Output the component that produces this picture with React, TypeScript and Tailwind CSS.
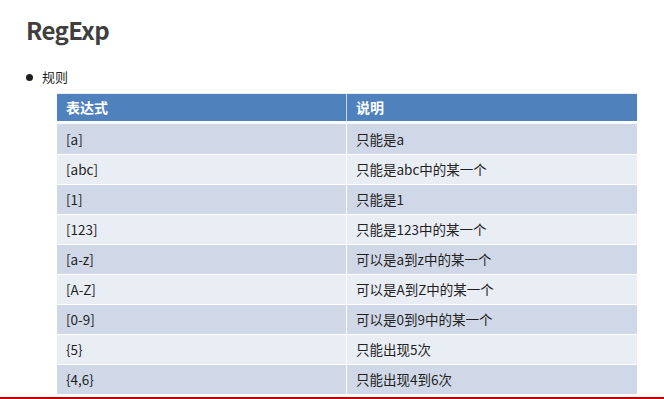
import React from "react";

const rows: [string, string][] = [
  ["[a]", "只能是a"],
  ["[abc]", "只能是abc中的某一个"],
  ["[1]", "只能是1"],
  ["[123]", "只能是123中的某一个"],
  ["[a-z]", "可以是a到z中的某一个"],
  ["[A-Z]", "可以是A到Z中的某一个"],
  ["[0-9]", "可以是0到9中的某一个"],
  ["{5}", "只能出现5次"],
  ["{4,6}", "只能出现4到6次"],
];

const font = { fontFamily: '"Noto Sans CJK SC", "Noto Sans", sans-serif' };

export default function App() {
  return (
    <div className="w-[664px] h-[399px] bg-white overflow-hidden flex flex-col" style={font}>
      <div className="pl-[26px] pt-[14px]">
        <h1 className="text-[24px] leading-[32px] font-bold tracking-[-0.6px] text-[#3f3f3f]">RegExp</h1>
        <div className="mt-[22px] flex items-center gap-[9px] text-[13px] leading-[18px] text-[#1f1f1f]">
          <span className="w-[7px] h-[7px] rounded-full bg-[#1f1f1f]" />
          <span>规则</span>
        </div>
      </div>
      <div className="ml-[57px] mt-[7px] w-[580px] flex flex-col">
        <div className="flex h-[28px] bg-[#4f81bd] text-white font-bold text-[14px] border-t border-[#e8edf4]">
          <div className="w-[289px] pl-[9px] flex items-center">表达式</div>
          <div className="w-[1px] bg-white/70" />
          <div className="flex-1 pl-[9px] flex items-center">说明</div>
        </div>
        <div className="h-[3px] bg-white" />
        {rows.map(([a, b], i) => (
          <div
            key={i}
            className={
              "flex h-[30px] text-[13.5px] text-[#1f1f1f] " +
              (i > 0 ? "border-t border-white " : "") +
              (i % 2 === 0 ? "bg-[#d0d8e8]" : "bg-[#e9edf4]")
            }
          >
            <div className="w-[289px] pl-[9px] flex items-center">{a}</div>
            <div className="w-[1px] bg-white" />
            <div className="flex-1 pl-[9px] flex items-center">{b}</div>
          </div>
        ))}
      </div>
      <div className="mt-[3px] h-[2px] bg-[#c00000] w-full" />
    </div>
  );
}
